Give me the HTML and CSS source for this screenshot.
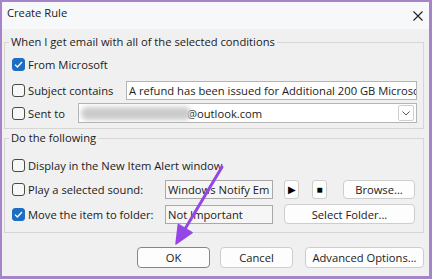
FILE: index.html
```html
<!DOCTYPE html>
<html lang="en">
<head>
<meta charset="UTF-8">
<title>Create Rule</title>
<link rel="stylesheet" href="styles.css">
</head>
<body>
<div class="window">
  <div class="titlebar">
    <span class="title">Create Rule</span>
    <svg class="close" width="10" height="10" viewBox="0 0 10 10"><path d="M0.5 0.5L9.5 9.5M9.5 0.5L0.5 9.5" stroke="#1f1f1f" stroke-width="1.1" fill="none"/></svg>
  </div>
  <div class="content">
    <fieldset class="group first">
      <legend>When I get email with all of the selected conditions</legend>
      <div class="row">
        <label class="check"><span class="box checked"><svg width="9" height="7" viewBox="0 0 9 7"><path d="M1 3.6L3.4 6L8 1" stroke="#fff" stroke-width="1.3" fill="none"/></svg></span>From Microsoft</label>
      </div>
      <div class="row r2">
        <label class="check w-subject"><span class="box"></span>Subject contains</label>
        <div class="field white">A refund has been issued for Additional 200 GB Microsc</div>
      </div>
      <div class="row r3">
        <label class="check w-sent"><span class="box"></span>Sent to</label>
        <div class="combo">
          <span class="blur"></span><span class="mail">@outlook.com</span>
          <span class="drop"><svg width="8" height="5" viewBox="0 0 8 5"><path d="M0.5 0.5L4 4L7.5 0.5" stroke="#555" stroke-width="1" fill="none"/></svg></span>
        </div>
      </div>
    </fieldset>
    <fieldset class="group second">
      <legend>Do the following</legend>
      <div class="row">
        <label class="check"><span class="box"></span>Display in the New Item Alert window</label>
      </div>
      <div class="row r5">
        <label class="check w-action"><span class="box"></span>Play a selected sound:</label>
        <div class="field grey">Windows Notify Em</div>
        <button class="btn icon play">&#9654;</button>
        <button class="btn icon stop">&#9632;</button>
        <button class="btn browse">Browse...</button>
      </div>
      <div class="row r6">
        <label class="check w-action"><span class="box checked"><svg width="9" height="7" viewBox="0 0 9 7"><path d="M1 3.6L3.4 6L8 1" stroke="#fff" stroke-width="1.3" fill="none"/></svg></span>Move the item to folder:</label>
        <div class="field grey">Not Important</div>
        <button class="btn folder">Select Folder...</button>
      </div>
    </fieldset>
    <div class="actions">
      <button class="btn ok">OK</button>
      <button class="btn cancel">Cancel</button>
      <button class="btn advanced">Advanced Options...</button>
    </div>
  </div>
  <svg class="arrow" width="432" height="279" viewBox="0 0 432 279">
    <path d="M220 165L183 227" stroke="#9446e6" stroke-width="3" stroke-linecap="round" fill="none"/>
    <polygon points="174,242 176.3,222.5 190.1,230.7" fill="#9446e6" stroke="#9446e6" stroke-width="1.5" stroke-linejoin="round"/>
  </svg>
</div>
</body>
</html>
```

FILE: styles.css
```css
body {
margin: 0;
background: #f0f0f0;
font-family: "Open Sans", "Noto Sans", sans-serif;
font-size: 11.2px;
color: #1b1b1b;
}
.window {
position: relative;
width: 432px;
height: 279px;
box-sizing: border-box;
border: 2px solid #a584c9;
border-right-width: 3px;
border-bottom-width: 3px;
background: #f0f0f0;
overflow: hidden;
}
.titlebar {
display: flex;
align-items: flex-start;
justify-content: space-between;
height: 27px;
box-sizing: border-box;
padding: 3px 6px 0 5px;
background: #f6f8fa;
}
.title {
line-height: 16px;
}
.close {
margin-top: 6px;
}
.content {
padding: 5px 5px 0 2px;
}
.group {
margin: 0;
min-width: 0;
border: 1px solid #d6d6d6;
padding: 4px 6px 5px 7px;
}
.group legend {
margin-left: -3px;
padding: 0 2px;
line-height: 16px;
}
.group.second {
margin-top: 1px;
padding: 9px 8px 8px 7px;
}
.row {
display: flex;
align-items: center;
height: 20px;
}
.r2 {
margin-top: 6px;
}
.r3 {
margin-top: 3px;
}
.r5 {
margin-top: 4px;
}
.r6 {
margin-top: 5px;
}
.check {
display: flex;
align-items: center;
flex-shrink: 0;
white-space: nowrap;
}
.w-subject {
width: 114px;
}
.w-sent {
width: 66px;
}
.w-action {
width: 153px;
}
.box {
display: flex;
align-items: center;
justify-content: center;
width: 13px;
height: 13px;
box-sizing: border-box;
border: 1px solid #4a4a4a;
border-radius: 3px;
background: #f7f7f7;
margin-right: 3px;
}
.box.checked {
border-color: #1d6ec2;
background: #1d6ec2;
}
.field {
height: 19px;
box-sizing: border-box;
border: 1px solid #b4b4b4;
padding: 0 2px;
line-height: 17px;
white-space: nowrap;
overflow: hidden;
}
.field.white {
flex: 1;
min-width: 0;
background: #fff;
}
.field.grey {
width: 108px;
flex-shrink: 0;
background: #f6f6f6;
border-color: #a9a9a9;
}
.combo {
flex: 1;
min-width: 0;
display: flex;
align-items: center;
height: 20px;
box-sizing: border-box;
border: 1px solid #b4b4b4;
background: #fff;
padding: 0 2px;
overflow: hidden;
}
.blur {
position: relative;
z-index: 1;
flex-shrink: 0;
width: 110px;
height: 13px;
margin-right: -4px;
border-radius: 6px;
background: #cbcbcb;
filter: blur(2.5px);
}
.mail {
white-space: nowrap;
}
.drop {
display: flex;
align-items: center;
justify-content: center;
flex-shrink: 0;
margin-left: auto;
width: 16px;
height: 16px;
box-sizing: border-box;
border: 1px solid #cfcfcf;
border-radius: 2px;
background: #fff;
}
.btn {
font: inherit;
color: inherit;
height: 19px;
box-sizing: border-box;
border: 1px solid #cdcdcd;
border-radius: 4px;
background: #fdfdfd;
padding: 0;
line-height: 17px;
}
.btn.icon {
width: 15px;
height: 19px;
border-radius: 3px;
font-size: 10px;
color: #000;
flex-shrink: 0;
}
.play {
margin-left: 11px;
}
.stop {
margin-left: 13px;
}
.browse {
width: 72px;
margin-left: auto;
}
.folder {
flex: 1;
height: 20px;
margin-left: 11px;
}
.actions {
display: flex;
justify-content: flex-end;
margin-top: 14px;
}
.actions .btn {
height: 21px;
line-height: 19px;
}
.ok {
width: 73px;
border-color: #7d8796;
}
.cancel {
width: 73px;
margin-left: 10px;
}
.advanced {
width: 119px;
margin-left: 12px;
}
.arrow {
position: absolute;
left: 0;
top: 0;
pointer-events: none;
}
```
